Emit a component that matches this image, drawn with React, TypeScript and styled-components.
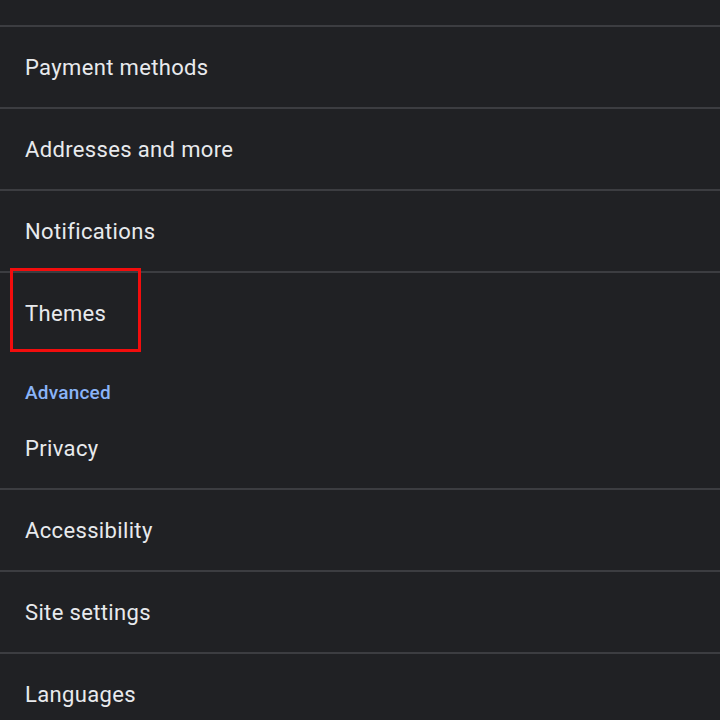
import React from "react";
import styled, { createGlobalStyle } from "styled-components";

const GlobalStyle = createGlobalStyle`
    html, body {
        margin: 0;
        padding: 0;
        background: #202124;
        overflow: hidden;
    }
`;

const Page = styled.div`
    width: 720px;
    height: 720px;
    overflow: hidden;
    background: #202124;
    font-family: Roboto, "Noto Sans", sans-serif;
    display: flex;
    flex-direction: column;
`;

const TopGap = styled.div`
    height: 25px;
    flex-shrink: 0;
`;

const Divider = styled.div`
    height: 2px;
    flex-shrink: 0;
    background: #3c3d41;
`;

const Row = styled.div`
    position: relative;
    height: 80px;
    flex-shrink: 0;
    display: flex;
    align-items: center;
    padding-left: 25px;
    color: #e8eaed;
    font-size: 22px;
    letter-spacing: 0.35px;
`;

const SectionHeader = styled.div`
    height: 55px;
    flex-shrink: 0;
    box-sizing: border-box;
    padding: 28px 0 0 25px;
    line-height: 24px;
    color: #8ab4f8;
    font-size: 19px;
    font-weight: 500;
    letter-spacing: 0.2px;
`;

const Highlight = styled.div`
    position: absolute;
    left: 10px;
    top: -5px;
    width: 131px;
    height: 84px;
    box-sizing: border-box;
    border: 3px solid #f20d0d;
    pointer-events: none;
`;

const items: { label: string; highlighted?: boolean; divider?: boolean }[] = [
    { label: "Payment methods", divider: true },
    { label: "Addresses and more", divider: true },
    { label: "Notifications", divider: true },
    { label: "Themes", highlighted: true },
];

const advanced = ["Privacy", "Accessibility", "Site settings", "Languages"];

export default function App() {
    return (
        <>
            <GlobalStyle />
            <Page>
                <TopGap />
                <Divider />
                {items.map((item) => (
                    <React.Fragment key={item.label}>
                        <Row>
                            {item.label}
                            {item.highlighted && <Highlight />}
                        </Row>
                        {item.divider && <Divider />}
                    </React.Fragment>
                ))}
                <SectionHeader>Advanced</SectionHeader>
                {advanced.map((label, i) => (
                    <React.Fragment key={label}>
                        <Row>{label}</Row>
                        {i < advanced.length - 1 && <Divider />}
                    </React.Fragment>
                ))}
            </Page>
        </>
    );
}
